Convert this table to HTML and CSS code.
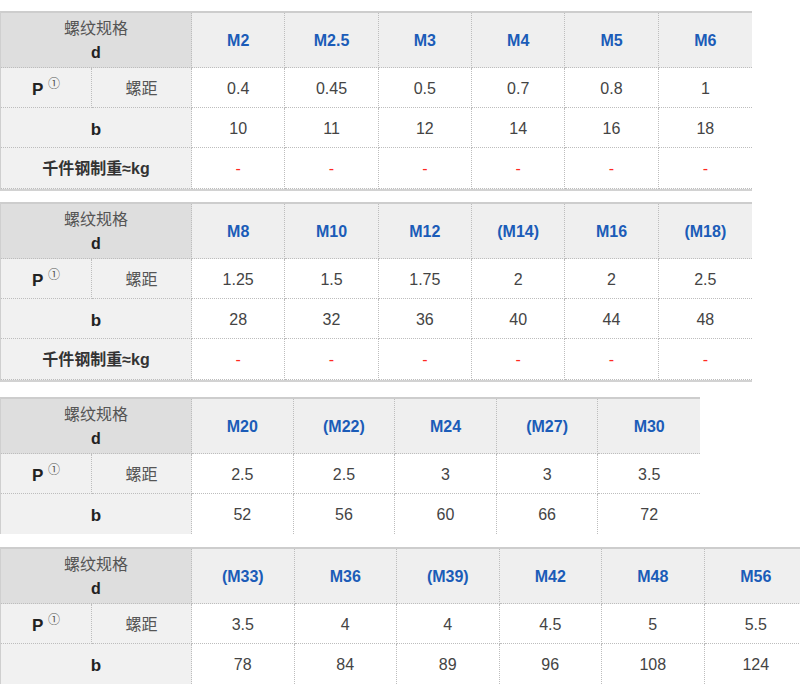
FILE: index.html
```html
<!DOCTYPE html>
<html lang="zh">
<head>
<meta charset="utf-8">
<title>螺纹规格</title>
<link rel="stylesheet" href="styles.css">
</head>
<body>
<div class="page">

<table class="spec spec-a closed">
  <colgroup><col class="c-p"><col class="c-l"><col span="6" class="c-a"></colgroup>
  <tr class="r-head">
    <th colspan="2" class="lab-head"><span class="cn">螺纹规格</span><br><b>d</b></th>
    <th>M2</th><th>M2.5</th><th>M3</th><th>M4</th><th>M5</th><th>M6</th>
  </tr>
  <tr class="r-row">
    <td class="lab big">P <sup>①</sup></td><td class="lab cn">螺距</td>
    <td>0.4</td><td>0.45</td><td>0.5</td><td>0.7</td><td>0.8</td><td>1</td>
  </tr>
  <tr class="r-row">
    <td colspan="2" class="lab big">b</td>
    <td>10</td><td>11</td><td>12</td><td>14</td><td>16</td><td>18</td>
  </tr>
  <tr class="r-last">
    <td colspan="2" class="lab bold">千件钢制重≈kg</td>
    <td class="dash">-</td><td class="dash">-</td><td class="dash">-</td><td class="dash">-</td><td class="dash">-</td><td class="dash">-</td>
  </tr>
</table>

<table class="spec spec-a closed gap1">
  <colgroup><col class="c-p"><col class="c-l"><col span="6" class="c-a"></colgroup>
  <tr class="r-head">
    <th colspan="2" class="lab-head"><span class="cn">螺纹规格</span><br><b>d</b></th>
    <th>M8</th><th>M10</th><th>M12</th><th>(M14)</th><th>M16</th><th>(M18)</th>
  </tr>
  <tr class="r-row">
    <td class="lab big">P <sup>①</sup></td><td class="lab cn">螺距</td>
    <td>1.25</td><td>1.5</td><td>1.75</td><td>2</td><td>2</td><td>2.5</td>
  </tr>
  <tr class="r-row">
    <td colspan="2" class="lab big">b</td>
    <td>28</td><td>32</td><td>36</td><td>40</td><td>44</td><td>48</td>
  </tr>
  <tr class="r-last">
    <td colspan="2" class="lab bold">千件钢制重≈kg</td>
    <td class="dash">-</td><td class="dash">-</td><td class="dash">-</td><td class="dash">-</td><td class="dash">-</td><td class="dash">-</td>
  </tr>
</table>

<table class="spec spec-b open gap2">
  <colgroup><col class="c-p"><col class="c-l"><col span="5" class="c-b"></colgroup>
  <tr class="r-head">
    <th colspan="2" class="lab-head"><span class="cn">螺纹规格</span><br><b>d</b></th>
    <th>M20</th><th>(M22)</th><th>M24</th><th>(M27)</th><th>M30</th>
  </tr>
  <tr class="r-row">
    <td class="lab big">P <sup>①</sup></td><td class="lab cn">螺距</td>
    <td>2.5</td><td>2.5</td><td>3</td><td>3</td><td>3.5</td>
  </tr>
  <tr class="r-end">
    <td colspan="2" class="lab big">b</td>
    <td>52</td><td>56</td><td>60</td><td>66</td><td>72</td>
  </tr>
</table>

<table class="spec spec-c open gap3">
  <colgroup><col class="c-p"><col class="c-l"><col span="6" class="c-c"></colgroup>
  <tr class="r-head">
    <th colspan="2" class="lab-head"><span class="cn">螺纹规格</span><br><b>d</b></th>
    <th>(M33)</th><th>M36</th><th>(M39)</th><th>M42</th><th>M48</th><th>M56</th>
  </tr>
  <tr class="r-row">
    <td class="lab big">P <sup>①</sup></td><td class="lab cn">螺距</td>
    <td>3.5</td><td>4</td><td>4</td><td>4.5</td><td>5</td><td>5.5</td>
  </tr>
  <tr class="r-end">
    <td colspan="2" class="lab big">b</td>
    <td>78</td><td>84</td><td>89</td><td>96</td><td>108</td><td>124</td>
  </tr>
</table>

</div>
</body>
</html>
```

FILE: styles.css
```css
html, body {
  margin: 0;
  padding: 0;
  background: #fff;
  overflow: hidden;
}

.page {
  padding-top: 11px;
  width: 800px;
  display: flex;
  flex-direction: column;
  align-items: flex-start;
  font-family: "Liberation Sans", "Noto Sans CJK SC", sans-serif;
  font-size: 16px;
  color: #444;
}

.spec {
  border-collapse: separate;
  border-spacing: 0;
  table-layout: fixed;
  border-top: 2px solid #cdcdcd;
  border-left: 1px solid #cfcfcf;
  flex: none;
}

.spec-a { width: 752px; }
.spec-b { width: 700px; }
.spec-c { width: 807px; }

.closed { border-bottom: 2px solid #d2d2d2; }

.gap1 { margin-top: 11px; }
.gap2 { margin-top: 15px; }
.gap3 { margin-top: 13px; }

.c-p { width: 91px; }
.c-l { width: 100px; }
.c-a { width: 93.33px; }
.c-b { width: 101.6px; }
.c-c { width: 102.5px; }

.spec th,
.spec td {
  box-sizing: border-box;
  padding: 2px 0 0;
  text-align: center;
  vertical-align: middle;
  border-right: 1px dotted #bdbdbd;
  border-bottom: 1px dotted #bdbdbd;
  line-height: 20px;
}

.spec th:last-child,
.spec td:last-child { border-right: none; }

.r-end td { border-bottom: none; }

.r-head { height: 55px; }
.r-row { height: 40px; }
.r-last { height: 41px; }
.r-end { height: 40px; }

.spec th {
  background: #efefef;
  color: #1b5cb8;
  font-weight: bold;
  font-size: 16px;
}

.spec th.lab-head {
  background: #dedede;
  color: #333;
  font-size: 16px;
  line-height: 24px;
}

.lab-head .cn {
  font-weight: normal;
  color: #555;
}

.lab-head b { color: #222; }

.spec td { background: #fff; color: #444; }

.spec td.lab {
  background: #f1f1f1;
  color: #222;
}

.spec td.big {
  font-size: 17px;
  font-weight: bold;
  padding-top: 4px;
}

.big sup {
  font-size: 12px;
  font-weight: normal;
  color: #555;
  vertical-align: baseline;
  position: relative;
  top: -7px;
  line-height: 0;
}

.spec td.cn {
  color: #555;
  font-weight: normal;
}

.spec td.bold {
  font-weight: bold;
  color: #333;
}

.spec td.dash { color: #ff2a1f; }
```
